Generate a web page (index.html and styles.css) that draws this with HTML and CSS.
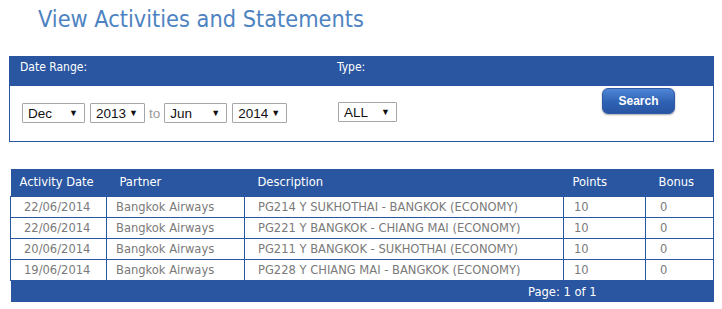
FILE: index.html
```html
<!DOCTYPE html>
<html>
<head>
<meta charset="utf-8">
<link rel="stylesheet" href="styles.css">
</head>
<body>
<h1 class="title">View Activities and Statements</h1>

<div class="filter">
  <div class="filter-head">
    <div class="lbl-date">Date Range:</div>
    <div class="lbl-type">Type:</div>
  </div>
  <div class="filter-body">
    <div class="range">
      <div class="sel w-mon"><span>Dec</span><span class="arr">▼</span></div>
      <div class="sel w-yr"><span>2013</span><span class="arr">▼</span></div>
      <span class="to">to</span>
      <div class="sel w-mon"><span>Jun</span><span class="arr">▼</span></div>
      <div class="sel w-yr"><span>2014</span><span class="arr">▼</span></div>
    </div>
    <div class="type">
      <div class="sel w-type"><span>ALL</span><span class="arr">▼</span></div>
    </div>
    <button class="search">Search</button>
  </div>
</div>

<table class="acts">
  <colgroup>
    <col class="c1"><col class="c2"><col class="c3"><col class="c4"><col class="c5">
  </colgroup>
  <thead>
    <tr><th>Activity Date</th><th>Partner</th><th>Description</th><th>Points</th><th>Bonus</th></tr>
  </thead>
  <tbody>
    <tr><td>22/06/2014</td><td>Bangkok Airways</td><td>PG214 Y SUKHOTHAI - BANGKOK (ECONOMY)</td><td>10</td><td>0</td></tr>
    <tr><td>22/06/2014</td><td>Bangkok Airways</td><td>PG221 Y BANGKOK - CHIANG MAI (ECONOMY)</td><td>10</td><td>0</td></tr>
    <tr><td>20/06/2014</td><td>Bangkok Airways</td><td>PG211 Y BANGKOK - SUKHOTHAI (ECONOMY)</td><td>10</td><td>0</td></tr>
    <tr><td>19/06/2014</td><td>Bangkok Airways</td><td>PG228 Y CHIANG MAI - BANGKOK (ECONOMY)</td><td>10</td><td>0</td></tr>
  </tbody>
  <tfoot>
    <tr><td colspan="5"><div class="pager">Page: 1 of 1</div></td></tr>
  </tfoot>
</table>
</body>
</html>
```

FILE: styles.css
```css
html, body {
  margin: 0;
  padding: 0;
  background: #fff;
}
body {
  font-family: "DejaVu Sans Condensed", "DejaVu Sans", sans-serif;
  font-size: 12px;
  color: #777;
}
.title {
  margin: 0;
  padding: 5px 0 0 38px;
  height: 56px;
  box-sizing: border-box;
  font-weight: normal;
  font-size: 23.3px;
  line-height: 28px;
  color: #4e83c2;
}
.filter {
  margin-left: 9px;
  width: 705px;
}
.filter-head {
  background: #2a56a1;
  height: 30px;
  box-sizing: border-box;
  padding-top: 4px;
  display: flex;
  align-items: flex-start;
  color: #fff;
  font-size: 12px;
  line-height: 14px;
}
.lbl-date { width: 317px; padding-left: 11px; }
.filter-body {
  position: relative;
  height: 56px;
  border: 1px solid #2a56a1;
  border-top: 0;
  display: flex;
  align-items: flex-start;
  padding-top: 17px;
  box-sizing: border-box;
}
.range {
  display: flex;
  align-items: center;
  gap: 5px;
  margin-left: 12px;
  width: 316px;
}
.type { margin-top: -1px; }
.sel {
  height: 20px;
  box-sizing: border-box;
  border: 1px solid #a6a6a6;
  border-radius: 1px;
  background: #fff;
  display: flex;
  align-items: center;
  justify-content: space-between;
  padding: 0 6px 0 5px;
  font-family: "Liberation Sans", Arial, sans-serif;
  font-size: 13.5px;
  color: #111;
}
.arr { font-size: 9px; color: #111; }
.w-mon { width: 63px; }
.w-yr { width: 55px; }
.w-type { width: 59px; }
.to {
  font-family: "Liberation Sans", Arial, sans-serif;
  font-size: 13.5px;
  color: #9a9a9a;
  margin: 0 -1px;
}
.search {
  position: absolute;
  left: 592px;
  top: 2px;
  width: 73px;
  height: 26px;
  border: 1px solid #2e5aa5;
  border-radius: 6px;
  background: linear-gradient(#4f86d6, #2f61b3 55%, #2855a3);
  box-shadow: 0 1px 2px rgba(0,0,0,0.35);
  color: #fff;
  font-family: "Liberation Sans", Arial, sans-serif;
  font-weight: bold;
  font-size: 12px;
  padding: 0;
}
.acts {
  margin: 27px 0 0 10px;
  width: 703px;
  border-collapse: collapse;
  table-layout: fixed;
  font-size: 12.8px;
  line-height: 15px;
}
.c1 { width: 96px; }
.c2 { width: 138px; }
.c3 { width: 319px; }
.c4 { width: 82px; }
.c5 { width: 68px; }
.acts th {
  background: #2a56a1;
  color: #fff;
  font-weight: normal;
  text-align: left;
  height: 27px;
  box-sizing: border-box;
  padding: 0 0 2px 13px;
}
.acts th:first-child { padding-left: 9px; }
.acts th:nth-child(4) { padding-left: 9px; }
.acts tbody td {
  height: 21px;
  box-sizing: border-box;
  border: 1px solid #2a56a1;
  padding: 0 0 0 13px;
  color: #7a7a7a;
  background: #fff;
  white-space: nowrap;
}
.acts tbody td:nth-child(2) { padding-left: 9px; }
.acts tbody td:nth-child(4) { padding-left: 10px; }
.acts tbody td:nth-child(5) { padding-left: 14px; }
.acts tfoot td {
  background: #2a56a1;
  height: 22px;
  box-sizing: border-box;
  padding: 0;
  color: #fff;
}
.pager {
  display: flex;
  justify-content: flex-end;
  padding-right: 117px;
}
```
